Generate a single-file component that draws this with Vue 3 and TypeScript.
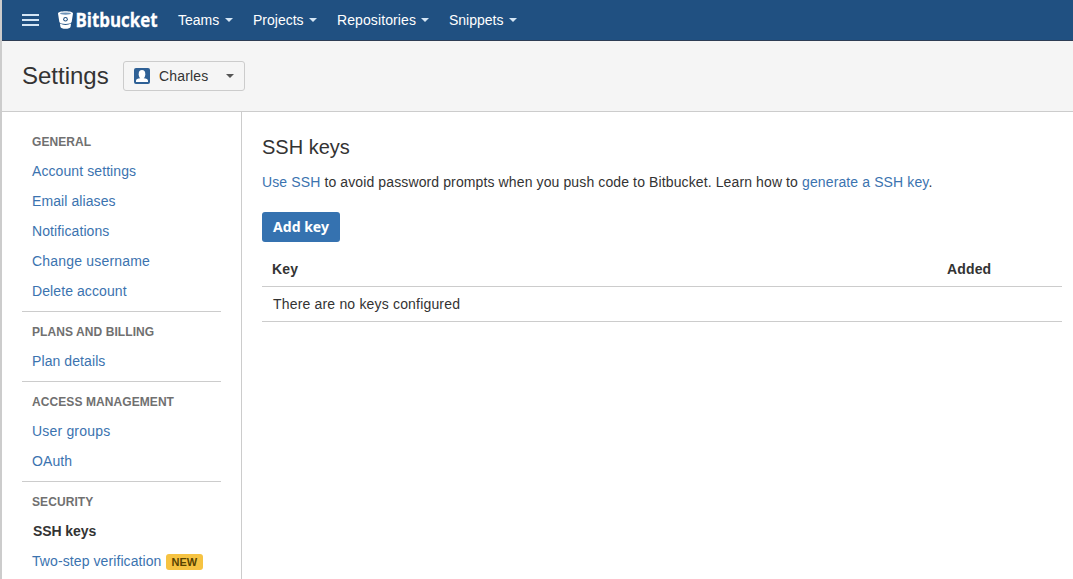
<script setup lang="ts">
interface NavLink {
  label: string
  wide?: boolean
  active?: boolean
  badge?: string
}
interface NavGroup {
  title: string
  links: NavLink[]
}

const menus: { label: string; cls: string }[] = [
  { label: 'Teams', cls: 'm-teams' },
  { label: 'Projects', cls: 'm-projects' },
  { label: 'Repositories', cls: 'm-repos' },
  { label: 'Snippets', cls: 'm-snippets' },
]

const groups: NavGroup[] = [
  {
    title: 'General',
    links: [
      { label: 'Account settings' },
      { label: 'Email aliases' },
      { label: 'Notifications' },
      { label: 'Change username', wide: true },
      { label: 'Delete account' },
    ],
  },
  { title: 'Plans and billing', links: [{ label: 'Plan details' }] },
  { title: 'Access management', links: [{ label: 'User groups', wide: true }, { label: 'OAuth' }] },
  {
    title: 'Security',
    links: [
      { label: 'SSH keys', active: true },
      { label: 'Two-step verification', badge: 'New' },
    ],
  },
]
</script>

<template>
  <div class="page">
    <header class="topbar">
      <svg class="burger" width="17" height="12" viewBox="0 0 17 12">
        <path d="M0 1h17M0 6h17M0 11h17" stroke="#d5e6f5" stroke-width="1.8" />
      </svg>
      <a class="logo">
        <svg width="15" height="18" viewBox="0 0 15 18">
          <path d="M0 2.6C0 1 3.3.2 7.5.2S15 1 15 2.6l-1.3 8.1c-.2 1.3-2.9 2.3-6.2 2.3s-6-1-6.2-2.3z" fill="#fff" />
          <ellipse cx="7.5" cy="2.6" rx="5.4" ry="1.1" fill="#6e93b8" />
          <circle cx="7.5" cy="8.2" r="2.3" fill="#205081" />
          <circle cx="7.5" cy="8.2" r="1.2" fill="#fff" />
          <path d="M1.9 12.6c3.2 1.9 8 1.9 11.2 0l-.6 3.3c-.3 1.2-2.3 1.8-5 1.8s-4.7-.6-5-1.8z" fill="#fff" />
        </svg>
        <svg class="wordmark" width="84" height="30" viewBox="0 0 84 30">
          <text x="0.5" y="22" textLength="82" lengthAdjust="spacingAndGlyphs">Bitbucket</text>
        </svg>
      </a>
      <nav class="menus">
        <a v-for="m in menus" :key="m.label" class="menu" :class="m.cls">
          <span>{{ m.label }}</span><i class="caret"></i>
        </a>
      </nav>
    </header>

    <section class="subhead">
      <h1>Settings</h1>
      <button class="account" type="button">
        <svg width="16" height="16" viewBox="0 0 16 16">
          <rect width="16" height="16" rx="2" fill="#2e6095" />
          <ellipse cx="8" cy="6.2" rx="3.3" ry="4.2" fill="#fff" />
          <path d="M2 14v-1.300c0-1.400 1.600-2.200 4.100-2.500l.4-.8h3l.4.8c2.500.3 4.100 1.100 4.100 2.500V14z" fill="#fff" />
        </svg>
        <span>Charles</span>
        <i class="caret dark"></i>
      </button>
    </section>

    <div class="body">
      <aside class="side">
        <section v-for="g in groups" :key="g.title" class="group">
          <h2>{{ g.title }}</h2>
          <a v-for="l in g.links" :key="l.label" class="link" :class="{ active: l.active, wide: l.wide }">
            <span>{{ l.label }}</span><b v-if="l.badge" class="badge">{{ l.badge }}</b>
          </a>
        </section>
      </aside>
      <main class="main">
        <h2 class="title">SSH keys</h2>
        <p class="intro">
          <a>Use SSH</a> to avoid password prompts when you push code to Bitbucket. Learn how to
          <a>generate a SSH key</a>.
        </p>
        <button class="add" type="button">Add key</button>
        <div class="table">
          <div class="row head"><span>Key</span><span>Added</span></div>
          <div class="row empty"><span>There are no keys configured</span></div>
        </div>
      </main>
    </div>
  </div>
</template>

<style>
body {
  margin: 0;
  overflow: hidden;
}
</style>

<style scoped>
.page {
  box-sizing: border-box;
  width: 100%;
  height: 579px;
  display: flex;
  flex-direction: column;
  border-left: 2px solid #ccc;
  background: #fff;
  color: #333;
  font: 14px/20px "Liberation Sans", Arial, sans-serif;
  overflow: hidden;
}
.page * {
  box-sizing: border-box;
}
h1,
h2,
p {
  margin: 0;
  font-weight: 400;
}
.topbar {
  flex: none;
  height: 41px;
  display: flex;
  align-items: center;
  padding-left: 20px;
  background: #205081;
  border-bottom: 1px solid #2e3d54;
}
.burger {
  flex: none;
}
.logo {
  display: flex;
  align-items: center;
  width: 101px;
  margin-left: 19px;
  gap: 2px;
}
.logo svg {
  flex: none;
}
.wordmark {
  overflow: visible;
}
.wordmark text {
  fill: #fff;
  stroke: #fff;
  stroke-width: 0.3px;
  font: 700 19.5px "Open Sans", "Noto Sans", sans-serif;
}
.menus {
  display: flex;
  gap: 20px;
  margin-left: 19px;
  color: #fff;
}
.menu {
  display: flex;
  align-items: center;
  justify-content: space-between;
  white-space: nowrap;
}
.m-teams { width: 55px; }
.m-projects { width: 64px; }
.m-repos { width: 92px; letter-spacing: 0.1px; }
.m-snippets { width: 68px; }
.caret {
  width: 0;
  height: 0;
  border: 4px solid transparent;
  border-top-color: #d5e6f5;
  border-bottom: 0;
}
.caret.dark {
  border-top-color: #555;
  margin-left: auto;
}
.subhead {
  flex: none;
  height: 71px;
  display: flex;
  align-items: center;
  padding-left: 20px;
  background: #f5f5f5;
  border-bottom: 1px solid #ccc;
}
h1 {
  width: 101px;
  font-size: 24px;
  line-height: 30px;
}
.account {
  width: 122px;
  height: 30px;
  display: flex;
  align-items: center;
  padding: 0 10px;
  border: 1px solid #ccc;
  border-radius: 3px;
  background: #f5f5f5;
  color: #333;
  font: inherit;
}
.account span {
  margin-left: 9px;
  letter-spacing: 0.15px;
}
.body {
  flex: 1;
  display: flex;
  min-height: 0;
}
.side {
  flex: none;
  width: 240px;
  padding: 15px 20px 0;
  border-right: 1px solid #ccc;
}
.group + .group {
  margin-top: 5px;
  padding-top: 5px;
  border-top: 1px solid #ccc;
}
.group h2 {
  height: 29px;
  padding-left: 10px;
  color: #707070;
  font-size: 12px;
  font-weight: 700;
  line-height: 30px;
  letter-spacing: 0.08px;
  text-transform: uppercase;
}
.link {
  display: flex;
  align-items: center;
  height: 30px;
  padding-left: 10px;
  white-space: nowrap;
  letter-spacing: 0.09px;
  color: #3b73af;
}
.link.wide {
  letter-spacing: 0.19px;
}
.link.active {
  padding-left: 11px;
  letter-spacing: -0.08px;
  color: #333;
  font-weight: 700;
}
.badge {
  height: 16px;
  margin: 2px 0 0 4px;
  padding: 0 6px;
  border-radius: 3px;
  background: #f6c342;
  color: #594300;
  font-size: 11px;
  line-height: 16px;
  letter-spacing: 0;
  text-transform: uppercase;
}
.main {
  flex: 1;
  padding: 20px 11px 0 20px;
}
.title {
  font-size: 20px;
  line-height: 30px;
}
.intro {
  margin-top: 10px;
  white-space: nowrap;
  letter-spacing: 0.116px;
}
.intro a {
  color: #3b73af;
}
.add {
  display: block;
  width: 78px;
  height: 30px;
  margin-top: 20px;
  padding: 0;
  border: 0;
  border-radius: 3px;
  background: #3572b0;
  color: #fff;
  font: 700 14px/30px "Noto Sans", "Open Sans", sans-serif;
}
.table {
  margin-top: 10px;
}
.row {
  height: 35px;
  display: grid;
  grid-template-columns: 675px 1fr;
  align-items: center;
  padding-left: 10px;
  border-bottom: 1px solid #ccc;
}
.head {
  font-weight: 700;
  letter-spacing: 0.15px;
}
.empty span {
  padding-left: 1px;
  letter-spacing: 0.18px;
}
</style>
